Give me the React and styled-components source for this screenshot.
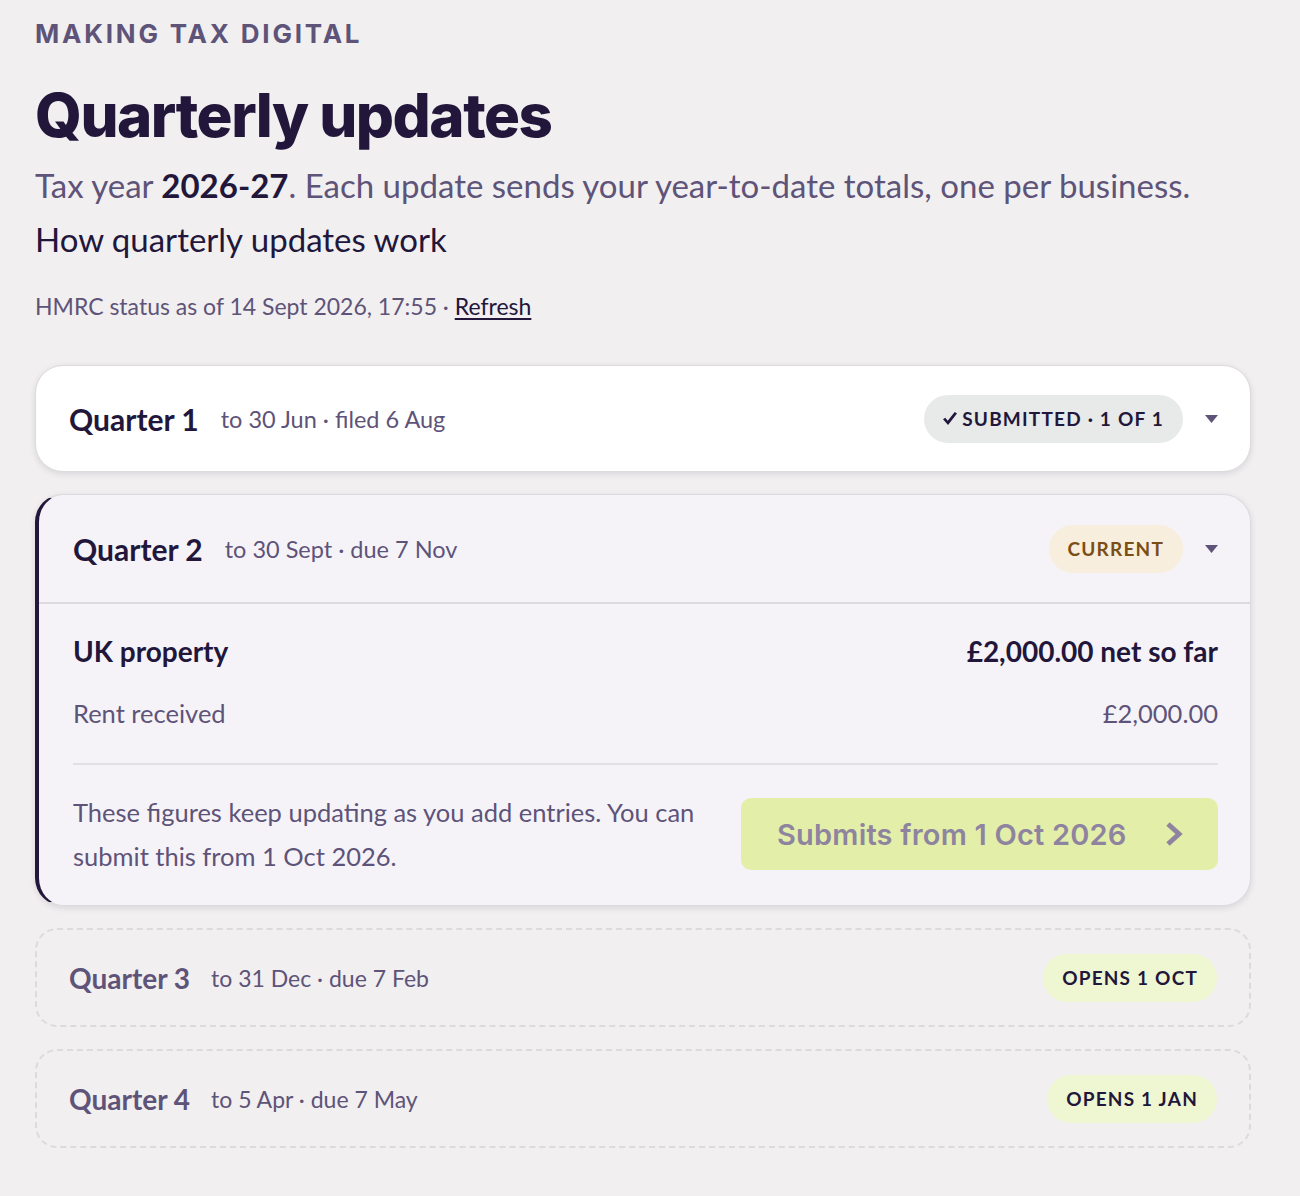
import styled, { createGlobalStyle, css } from "styled-components";

const GlobalStyle = createGlobalStyle`
  body {
    margin: 0;
    background: #f1eff0;
    font-family: "Lato", "Noto Sans", sans-serif;
    color: #22173b;
  }
`;

const Page = styled.main`
  padding: 18px 49px 48px 35px;
`;

const Eyebrow = styled.div`
  font-family: "Inter", sans-serif;
  font-weight: 700;
  font-size: 26px;
  line-height: 31px;
  letter-spacing: 2.8px;
  color: #5e5378;
  text-transform: uppercase;
`;

const Title = styled.h1`
  margin: 30px 0 0;
  font-family: "Inter", sans-serif;
  font-weight: 800;
  font-size: 60px;
  letter-spacing: -1.5px;
  line-height: 72px;
  color: #22173b;
`;

const Lead = styled.p`
  margin: 12px 0 0;
  font-size: 33px;
  line-height: 44px;
  color: #5e5378;

  strong {
    color: #22173b;
    font-weight: 700;
  }
`;

const HelpLink = styled.div`
  margin-top: 10px;
  font-size: 33px;
  line-height: 44px;
  color: #22173b;
`;

const Status = styled.p`
  margin: 30px 0 0;
  font-size: 23px;
  line-height: 30px;
  color: #5e5378;

  a {
    color: #22173b;
    text-decoration: underline;
    text-underline-offset: 3px;
  }
`;

const List = styled.div`
  margin-top: 44px;
  display: flex;
  flex-direction: column;
  gap: 22px;
`;

const Card = styled.section`
  border-radius: 28px;
  ${(p) =>
    p.$variant === "done" &&
    css`
      background: #fff;
      border: 1px solid #dcdadd;
      box-shadow: 0 2px 6px rgba(40, 30, 60, 0.12);
    `}
  ${(p) =>
    p.$variant === "current" &&
    css`
      background: #f5f3f8;
      border: 1px solid #dcdadd;
      border-left: 4px solid #22173b;
      box-shadow: 0 2px 6px rgba(40, 30, 60, 0.12);
    `}
  ${(p) =>
    p.$variant === "future" &&
    css`
      border: 2px dashed #dcdadd;
      border-radius: 22px;
    `}
`;

const Header = styled.header`
  display: flex;
  align-items: center;
  height: ${(p) => p.$h}px;
  padding: 0 32px 0 ${(p) => p.$pl}px;
  ${(p) => p.$divider && "border-bottom: 2px solid #dcdadd;"}
`;

const QName = styled.span`
  font-size: ${(p) => (p.$muted ? 28 : 30)}px;
  font-weight: 700;
  color: ${(p) => (p.$muted ? "#5e5378" : "#22173b")};
`;

const QMeta = styled.span`
  margin-left: ${(p) => (p.$small ? 21 : 22)}px;
  font-size: ${(p) => (p.$small ? 23 : 23.5)}px;
  color: #5e5378;
`;

const Spacer = styled.div`
  flex: 1;
`;

const tones = {
  grey: "background:#e8e9e9;color:#22173b;",
  amber: "background:#f8eedd;color:#7a4e16;",
  lime: "background:#eef7d2;color:#22173b;",
};

const Pill = styled.span`
  display: inline-flex;
  align-items: center;
  gap: 5px;
  height: 48px;
  padding: 0 19px;
  border-radius: 24px;
  font-size: 19px;
  font-weight: 700;
  letter-spacing: 1.2px;
  text-transform: uppercase;
  ${(p) => tones[p.$tone]}
`;

const Tick = styled.svg`
  width: 14px;
  height: 13px;
  margin-top: -1px;
`;

const Caret = styled.svg`
  margin-left: 22px;
  width: 13px;
  height: 8px;
  fill: #5e5378;
`;

const Body = styled.div`
  padding: 30px 32px 27px 34px;
`;

const Row = styled.div`
  display: flex;
  justify-content: space-between;
  align-items: baseline;
  font-size: ${(p) => (p.$strong ? 28 : 25.5)}px;
  font-weight: ${(p) => (p.$strong ? 700 : 400)};
  color: ${(p) => (p.$strong ? "#22173b" : "#5e5378")};
  margin-top: ${(p) => p.$mt || 0}px;
`;

const Rule = styled.hr`
  margin: 35px 0 0;
  border: 0;
  border-top: 2px solid #e2e0e4;
`;

const Footer = styled.div`
  margin-top: 25px;
  display: flex;
  align-items: center;
  justify-content: space-between;
  gap: 38px;
`;

const Note = styled.p`
  margin: 0;
  max-width: 650px;
  font-size: 25.5px;
  line-height: 44px;
  color: #5e5378;
`;

const SubmitButton = styled.button`
  flex: 0 0 477px;
  height: 72px;
  display: flex;
  align-items: center;
  justify-content: space-between;
  padding: 0 34px 0 36px;
  border: 0;
  border-radius: 10px;
  background: #e3efa8;
  color: #8e84a0;
  font-family: "Inter", sans-serif;
  font-weight: 600;
  font-size: 29px;
  letter-spacing: 0.2px;
  cursor: not-allowed;
`;

const Arrow = () => (
  <svg width="20" height="24" viewBox="0 0 20 24">
    <path d="M4 2 L15 12 L4 22" fill="none" stroke="#8e84a0" strokeWidth="5" strokeLinejoin="miter" />
  </svg>
);

const DownCaret = () => (
  <Caret viewBox="0 0 13 8">
    <path d="M0 0 H13 L6.5 8 Z" />
  </Caret>
);

const CheckMark = () => (
  <Tick viewBox="0 0 13 12">
    <path d="M0 6.6 L2.1 5.3 L4.4 8.2 L10.9 0 L13 1.3 L4.7 12 Z" fill="#22173b" />
  </Tick>
);

export default function App() {
  return (
    <>
      <GlobalStyle />
      <Page>
        <Eyebrow>Making Tax Digital</Eyebrow>
        <Title>Quarterly updates</Title>
        <Lead>
          Tax year <strong>2026-27</strong>. Each update sends your year-to-date totals, one per business.
        </Lead>
        <HelpLink>How quarterly updates work</HelpLink>
        <Status>
          HMRC status as of 14 Sept 2026, 17:55 · <a href="#">Refresh</a>
        </Status>

        <List>
          <Card $variant="done">
            <Header $h={105} $pl={33}>
              <QName>Quarter 1</QName>
              <QMeta>to 30 Jun · filed 6 Aug</QMeta>
              <Spacer />
              <Pill $tone="grey">
                <CheckMark />
                Submitted · 1 of 1
              </Pill>
              <DownCaret />
            </Header>
          </Card>

          <Card $variant="current">
            <Header $h={107} $pl={34} $divider>
              <QName>Quarter 2</QName>
              <QMeta>to 30 Sept · due 7 Nov</QMeta>
              <Spacer />
              <Pill $tone="amber">Current</Pill>
              <DownCaret />
            </Header>
            <Body>
              <Row $strong>
                <span>UK property</span>
                <span>£2,000.00 net so far</span>
              </Row>
              <Row $mt={30}>
                <span>Rent received</span>
                <span>£2,000.00</span>
              </Row>
              <Rule />
              <Footer>
                <Note>
                  These figures keep updating as you add entries. You can submit this from 1 Oct 2026.
                </Note>
                <SubmitButton disabled>
                  Submits from 1 Oct 2026
                  <Arrow />
                </SubmitButton>
              </Footer>
            </Body>
          </Card>

          <Card $variant="future">
            <Header $h={95} $pl={32}>
              <QName $muted>Quarter 3</QName>
              <QMeta $small>to 31 Dec · due 7 Feb</QMeta>
              <Spacer />
              <Pill $tone="lime">Opens 1 Oct</Pill>
            </Header>
          </Card>

          <Card $variant="future">
            <Header $h={95} $pl={32}>
              <QName $muted>Quarter 4</QName>
              <QMeta $small>to 5 Apr · due 7 May</QMeta>
              <Spacer />
              <Pill $tone="lime">Opens 1 Jan</Pill>
            </Header>
          </Card>
        </List>
      </Page>
    </>
  );
}
